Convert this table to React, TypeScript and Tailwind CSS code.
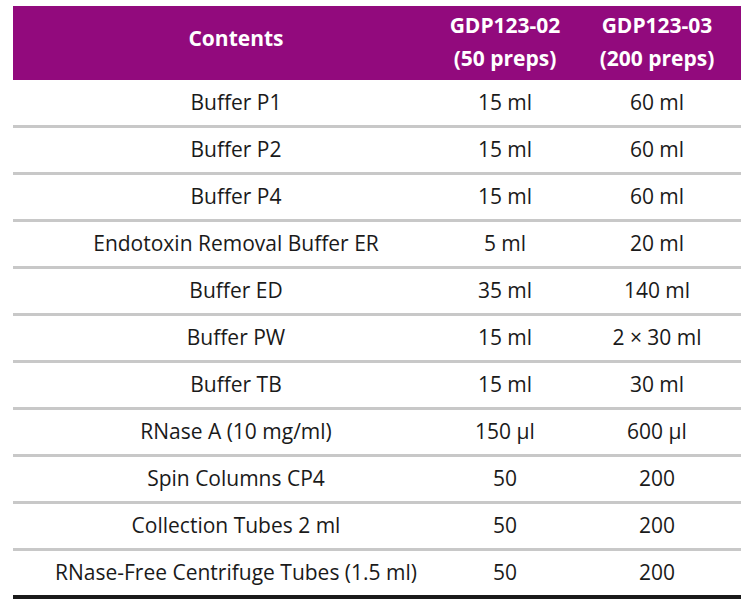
const rows: [string, string, string][] = [
  ['Buffer P1', '15 ml', '60 ml'],
  ['Buffer P2', '15 ml', '60 ml'],
  ['Buffer P4', '15 ml', '60 ml'],
  ['Endotoxin Removal Buffer ER', '5 ml', '20 ml'],
  ['Buffer ED', '35 ml', '140 ml'],
  ['Buffer PW', '15 ml', '2 × 30 ml'],
  ['Buffer TB', '15 ml', '30 ml'],
  ['RNase A (10 mg/ml)', '150 µl', '600 µl'],
  ['Spin Columns CP4', '50', '200'],
  ['Collection Tubes 2 ml', '50', '200'],
  ['RNase-Free Centrifuge Tubes (1.5 ml)', '50', '200'],
]

export default function App() {
  return (
    <div className="min-h-[607px] w-[752px] bg-white pl-[13px] pt-[6px] font-['Open_Sans',sans-serif] text-[#1a1a1a]">
      <div className="w-[728px]">
        {/* header */}
        <div className="grid h-[74px] grid-cols-[446px_92px_190px] items-center whitespace-nowrap bg-[#920a7d] pb-[3px] text-[21px] font-bold leading-[33px] text-white">
          <div className="mb-[6px] text-center">Contents</div>
          <div className="flex flex-col items-center">
            <span>GDP123-02</span>
            <span>(50 preps)</span>
          </div>
          <div className="flex flex-col items-center pl-[22px]">
            <span>GDP123-03</span>
            <span>(200 preps)</span>
          </div>
        </div>

        {rows.map(([name, a, b], i) => (
          <div
            key={name}
            className={`grid grid-cols-[446px_92px_190px] items-center whitespace-nowrap text-[21px] ${
              i === rows.length - 1
                ? 'h-[48px] border-b-4 border-[#1a1a1a]'
                : i === 0
                  ? 'h-[48px] border-b-[3px] border-[#c8c8c8]'
                  : 'h-[47px] border-b-[3px] border-[#c8c8c8]'
            }`}
          >
            <div className="text-center">{name}</div>
            <div className="flex justify-center">{a}</div>
            <div className="flex justify-center pl-[22px]">{b}</div>
          </div>
        ))}
      </div>
    </div>
  )
}
